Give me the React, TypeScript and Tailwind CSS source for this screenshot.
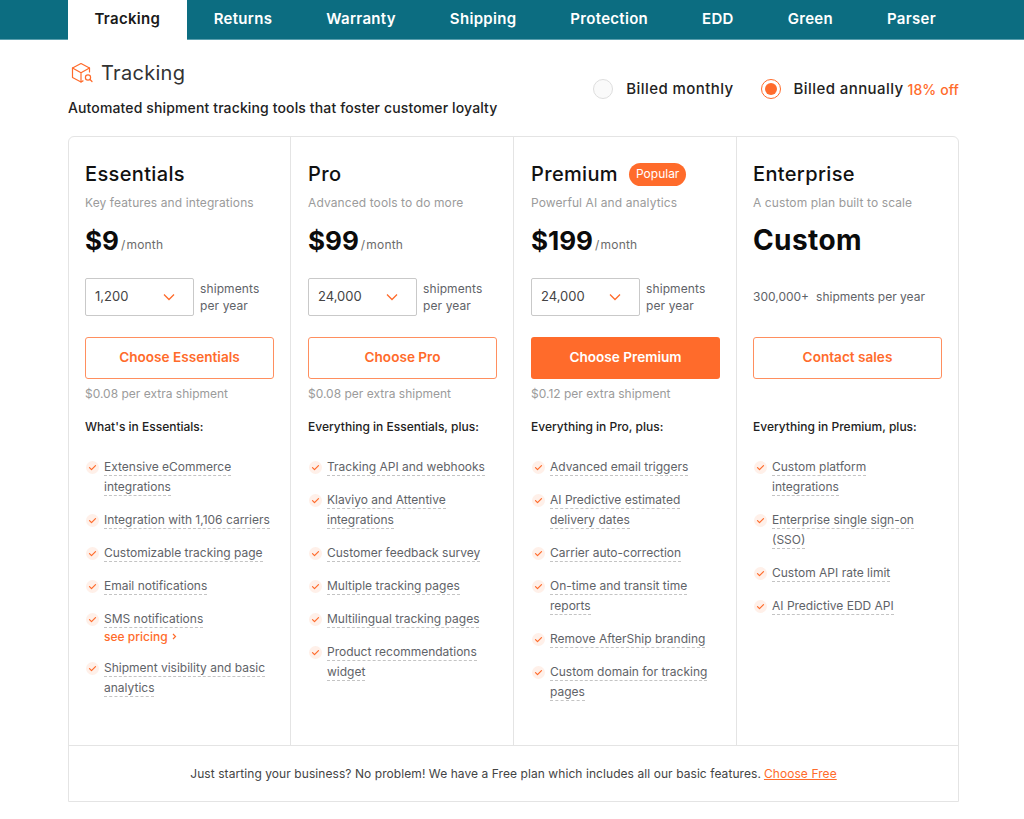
import React from 'react'

const TABS = ['Tracking', 'Returns', 'Warranty', 'Shipping', 'Protection', 'EDD', 'Green', 'Parser']

type Feature = { lines: string[]; pricing?: boolean }

type Plan = {
  name: string
  tagline: string
  price: string
  volume?: string
  cta: string
  extra?: string
  heading: string
  features: Feature[]
  popular?: boolean
}

const PLANS: Plan[] = [
  {
    name: 'Essentials',
    tagline: 'Key features and integrations',
    price: '$9',
    volume: '1,200',
    cta: 'Choose Essentials',
    extra: '$0.08 per extra shipment',
    heading: "What's in Essentials:",
    features: [
      { lines: ['Extensive eCommerce', 'integrations'] },
      { lines: ['Integration with 1,106 carriers'] },
      { lines: ['Customizable tracking page'] },
      { lines: ['Email notifications'] },
      { lines: ['SMS notifications'], pricing: true },
      { lines: ['Shipment visibility and basic', 'analytics'] },
    ],
  },
  {
    name: 'Pro',
    tagline: 'Advanced tools to do more',
    price: '$99',
    volume: '24,000',
    cta: 'Choose Pro',
    extra: '$0.08 per extra shipment',
    heading: 'Everything in Essentials, plus:',
    features: [
      { lines: ['Tracking API and webhooks'] },
      { lines: ['Klaviyo and Attentive', 'integrations'] },
      { lines: ['Customer feedback survey'] },
      { lines: ['Multiple tracking pages'] },
      { lines: ['Multilingual tracking pages'] },
      { lines: ['Product recommendations', 'widget'] },
    ],
  },
  {
    name: 'Premium',
    tagline: 'Powerful AI and analytics',
    price: '$199',
    volume: '24,000',
    cta: 'Choose Premium',
    extra: '$0.12 per extra shipment',
    heading: 'Everything in Pro, plus:',
    popular: true,
    features: [
      { lines: ['Advanced email triggers'] },
      { lines: ['AI Predictive estimated', 'delivery dates'] },
      { lines: ['Carrier auto-correction'] },
      { lines: ['On-time and transit time', 'reports'] },
      { lines: ['Remove AfterShip branding'] },
      { lines: ['Custom domain for tracking', 'pages'] },
    ],
  },
  {
    name: 'Enterprise',
    tagline: 'A custom plan built to scale',
    price: 'Custom',
    cta: 'Contact sales',
    heading: 'Everything in Premium, plus:',
    features: [
      { lines: ['Custom platform', 'integrations'] },
      { lines: ['Enterprise single sign-on', '(SSO)'] },
      { lines: ['Custom API rate limit'] },
      { lines: ['AI Predictive EDD API'] },
    ],
  },
]

function BoxIcon() {
  return (
    <svg width="23" height="22" viewBox="0 0 23 22" fill="none" stroke="#ff6b2b" strokeWidth="1.2" strokeLinejoin="round" strokeLinecap="round">
      <path d="M18.5 10V6L10 1.5 1.5 6v9.5L10 20l2-1.1" />
      <path d="M1.5 6L10 10.7 18.5 6M10 10.7V20" />
      <circle cx="17" cy="15.5" r="2.6" />
      <path d="M19 17.5l2 2" />
    </svg>
  )
}

function CheckBullet() {
  return (
    <span className="w-[13px] h-[13px] mt-[4px] rounded-full bg-[#fff0e9] flex items-center justify-center shrink-0">
      <svg width="9" height="9" viewBox="0 0 9 9" fill="none" stroke="#ff6b2b" strokeWidth="1.2" strokeLinecap="round" strokeLinejoin="round">
        <path d="M1.5 4.6l2 2 4-4" />
      </svg>
    </span>
  )
}

function FeatureRow({ feature }: { feature: Feature }) {
  return (
    <li className="flex gap-[5px] text-[12px] leading-[20px] text-[#5f6368] ml-[1px]">
      <CheckBullet />
      <div>
        {feature.lines.map((line) => (
          <div key={line} className="h-[20px]">
            <span className="inline-block leading-[17px] border-b border-dashed border-[#c4c4c4]">{line}</span>
          </div>
        ))}
        {feature.pricing && (
          <div className="h-[17px] leading-[17px] text-[#ff6b2b] font-medium -mt-[1px] flex items-center gap-[4px]">
            see pricing
            <svg width="5" height="7" viewBox="0 0 5 7" fill="none" stroke="#ff6b2b" strokeWidth="1.2">
              <path d="M1 1l2.5 2.5L1 6" />
            </svg>
          </div>
        )}
      </div>
    </li>
  )
}

function PlanColumn({ plan }: { plan: Plan }) {
  const isCustom = !plan.volume
  return (
    <div className="w-[223px] pl-[17px] pt-[24px] border-r border-[#e4e4e4] first:w-[222px] first:pl-[16px] last:border-r-0 last:w-[221px] last:pl-[16px]">
      <div className="h-[26px] flex items-center gap-[11px]">
        <h3 className="text-[20px] leading-[26px] font-medium text-[#111] tracking-[0.35px]">{plan.name}</h3>
        {plan.popular && (
          <span className="h-[23px] px-[7px] rounded-full bg-[#ff6b2b] text-white text-[12px] flex items-center">Popular</span>
        )}
      </div>
      <p className="mt-[7px] h-[18px] leading-[18px] text-[12px] text-[#9b9b9b] tracking-[0.1px]">{plan.tagline}</p>
      <div className="mt-[8px] h-[40px] flex items-center">
        {isCustom ? (
          <span className="text-[28px] font-bold text-[#0b0b0b] tracking-[0.4px]">{plan.price}</span>
        ) : (
          <>
            <span className="text-[26px] font-bold text-[#0b0b0b]">{plan.price}</span>
            <span className="text-[12px] text-[#6b6b6b] mt-[10px] ml-[2px] flex gap-[1px] tracking-[0.2px]">
              <span>/</span>
              <span>month</span>
            </span>
          </>
        )}
      </div>
      {isCustom ? (
        <div className="mt-[18px] h-[38px] flex items-center text-[12px] text-[#5f6368] gap-[7px]">
          <span>300,000+</span>
          <span>shipments per year</span>
        </div>
      ) : (
        <div className="mt-[18px] h-[38px] flex items-center gap-[6px]">
          <div className="w-[109px] h-[38px] border border-[#c9c9c9] rounded-[2px] flex items-center justify-between pl-[9px] pr-[18px] text-[13px] text-[#444]">
            <span>{plan.volume}</span>
            <svg width="12" height="8" viewBox="0 0 12 8" fill="none" stroke="#ff6b2b" strokeWidth="1.3">
              <path d="M1 1.5l5 5 5-5" />
            </svg>
          </div>
          <div className="text-[12px] leading-[17px] text-[#5f6368] tracking-[0.1px]">
            shipments
            <br />
            per year
          </div>
        </div>
      )}
      <button
        className={
          plan.popular
            ? 'mt-[21px] w-[189px] h-[42px] pb-[1px] rounded-[3px] bg-[#ff6b2b] text-white text-[13.6px] font-semibold'
            : 'mt-[21px] w-[189px] h-[42px] pb-[1px] rounded-[3px] border border-[#ff8f5f] bg-white text-[#ff6b2b] text-[13.6px] font-semibold'
        }
      >
        {plan.cta}
      </button>
      <p className="mt-[6px] h-[17px] leading-[17px] text-[12px] text-[#9b9b9b]">{plan.extra}</p>
      <p className="mt-[16px] h-[17px] leading-[17px] text-[12px] font-medium text-[#222]">{plan.heading}</p>
      <ul className="mt-[22px] flex flex-col gap-[13px]">
        {plan.features.map((f) => (
          <FeatureRow key={f.lines[0]} feature={f} />
        ))}
      </ul>
    </div>
  )
}

export default function App() {
  return (
    <div className="min-h-[819px] bg-white font-['Inter',sans-serif]">
      {/* Tabs */}
      <nav className="h-[40px] bg-[#0c6d81] border-b border-[#5a9fae] pl-[68px] flex">
        {TABS.map((t, i) => (
          <a
            key={t}
            className={
              i === 0
                ? 'h-[40px] px-[26.5px] pb-[1px] bg-white text-[#1a1a1a] text-[15px] tracking-[0.3px] font-semibold flex items-center'
                : 'h-[39px] px-[27px] pb-[1px] text-white text-[15px] tracking-[0.3px] font-semibold flex items-center'
            }
          >
            {t}
          </a>
        ))}
      </nav>

      <div className="mx-[65px] ml-[68px]">
        {/* Header */}
        <div className="h-[96px] flex justify-between">
          <div>
            <div className="mt-[21px] h-[24px] flex items-center gap-[7px] ml-[3px]">
              <BoxIcon />
              <span className="text-[20px] text-[#333] tracking-[0.3px]">Tracking</span>
            </div>
            <p className="mt-[13px] text-[14px] leading-[20px] font-medium text-[#222] tracking-[0.13px]">
              Automated shipment tracking tools that foster customer loyalty
            </p>
          </div>
          <div className="mt-[39px] h-[20px] flex items-center text-[15px] tracking-[0.42px] font-medium text-[#222]">
            <span className="w-[20px] h-[20px] rounded-full border border-[#dedede] bg-[#fafafa]" />
            <span className="ml-[13px]">Billed monthly</span>
            <span className="ml-[27px] w-[20px] h-[20px] rounded-full border border-[#ff6b2b] flex items-center justify-center">
              <span className="w-[12px] h-[12px] rounded-full bg-[#ff6b2b]" />
            </span>
            <span className="ml-[13px]">Billed annually</span>
            <span className="ml-[4px] text-[#ff6b2b] text-[14px] tracking-[0.1px]">18% off</span>
          </div>
        </div>

        {/* Plans */}
        <div className="w-[891px] h-[666px] border border-[#e4e4e4] rounded-tl-[6px] rounded-tr-[6px] flex flex-col">
          <div className="h-[609px] flex border-b border-[#e4e4e4]">
            {PLANS.map((p) => (
              <PlanColumn key={p.name} plan={p} />
            ))}
          </div>
          <p className="flex-1 flex items-center justify-center text-[12px] tracking-[0.07px] text-[#444]">
            Just starting your business? No problem! We have a Free plan which includes all our basic features.
            <a className="ml-[3px] text-[#ff6b2b] underline">Choose Free</a>
          </p>
        </div>
      </div>
    </div>
  )
}
